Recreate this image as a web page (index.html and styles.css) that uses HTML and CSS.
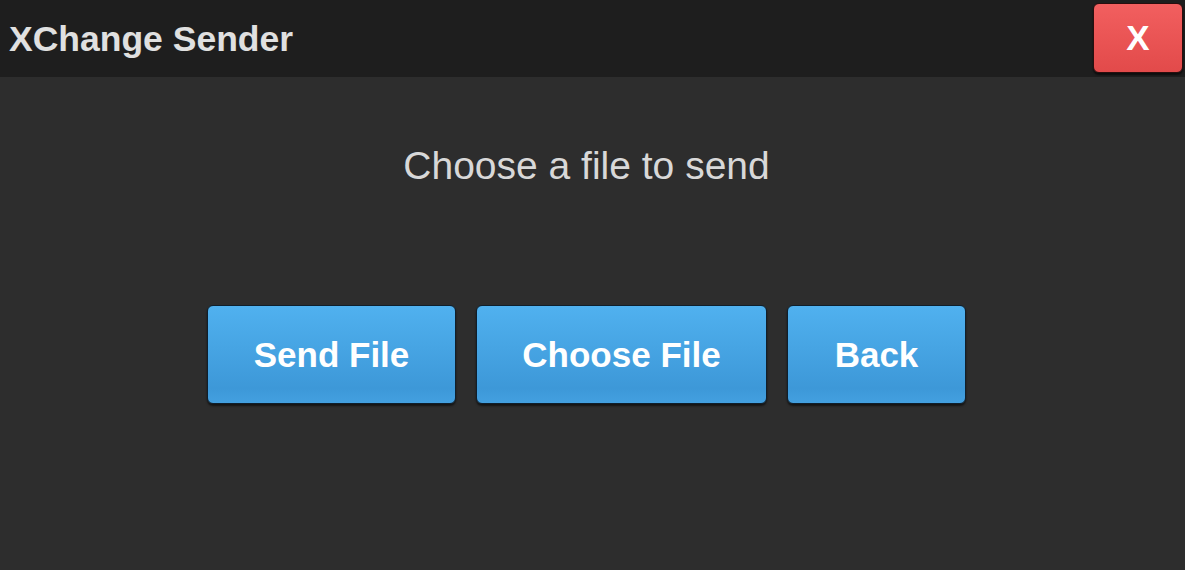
FILE: index.html
```html
<!DOCTYPE html>
<html>
<head>
<meta charset="utf-8">
<link rel="stylesheet" href="styles.css">
</head>
<body>
<header class="topbar">
  <div class="title">XChange Sender</div>
  <button class="close">X</button>
</header>
<main class="content">
  <p class="prompt">Choose a file to send</p>
  <div class="actions">
    <button class="btn btn-send">Send File</button>
    <button class="btn btn-choose">Choose File</button>
    <button class="btn btn-back">Back</button>
  </div>
</main>
</body>
</html>
```
FILE: styles.css
```css
html, body {
  margin: 0;
  padding: 0;
  height: 100%;
}
body {
  background: #2d2d2d;
  font-family: "Liberation Sans", Arial, sans-serif;
  color: #dcdcdc;
}
.topbar {
  display: flex;
  justify-content: space-between;
  align-items: flex-start;
  height: 77px;
  background: #1e1e1e;
}
.title {
  font-size: 35.5px;
  font-weight: bold;
  color: #e0e0e0;
  padding-left: 9px;
  line-height: 40px;
  margin-top: 19px;
}
.close {
  margin: 3px 2px 0 0;
  width: 90px;
  height: 70px;
  border: 1px solid #2a0e0e;
  border-radius: 6px;
  background: linear-gradient(#f25f5f, #e24a4a);
  box-shadow: 0 2px 2px rgba(0,0,0,0.6);
  color: #ffffff;
  font-family: "Liberation Sans", Arial, sans-serif;
  font-size: 35px;
  font-weight: bold;
  padding: 0;
  display: flex;
  align-items: center;
  justify-content: center;
}
.content {
  display: flex;
  flex-direction: column;
  align-items: center;
  padding-right: 12px;
}
.prompt {
  margin: 67px 0 0 0;
  font-size: 39px;
  line-height: 44px;
  color: #d8d8d8;
}
.actions {
  display: flex;
  gap: 20px;
  margin-top: 117px;
}
.btn {
  height: 99px;
  padding: 0;
  border: 1px solid #0f1f2c;
  border-radius: 6px;
  background: linear-gradient(#50b1ef, #3d98d8 85%, #43a0e0);
  box-shadow: 0 2px 2px rgba(0,0,0,0.55);
  color: #ffffff;
  font-family: "Liberation Sans", Arial, sans-serif;
  font-size: 35px;
  font-weight: bold;
  white-space: nowrap;
  display: flex;
  align-items: center;
  justify-content: center;
}
.btn-send { width: 249px; }
.btn-choose { width: 291px; }
.btn-back { width: 179px; }
```
